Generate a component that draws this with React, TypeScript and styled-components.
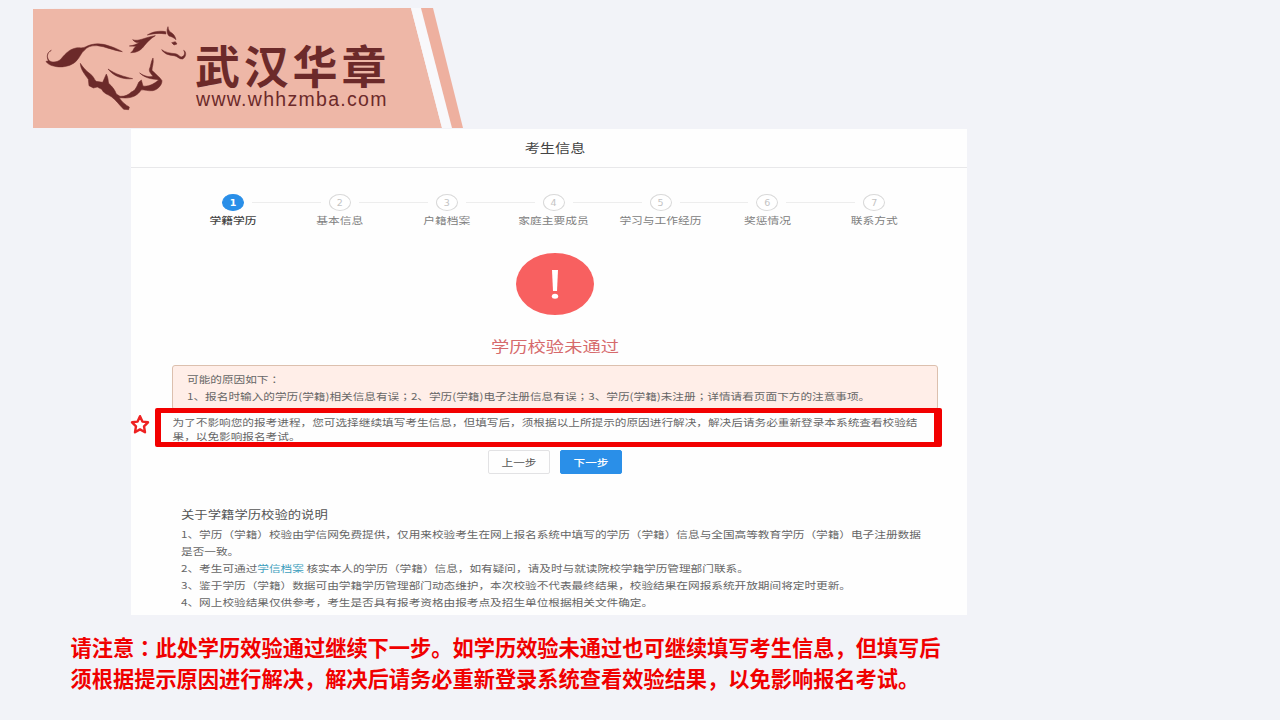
import React from "react";
import styled, { createGlobalStyle } from "styled-components";

const GlobalStyle = createGlobalStyle`
  body {
    margin: 0;
    background: #f2f3f8;
    font-family: "Noto Sans CJK SC", "Liberation Sans", sans-serif;
  }
`;

const Page = styled.main`
  width: 1280px;
  height: 720px;
  overflow: hidden;
  display: flex;
  flex-direction: column;
  align-items: flex-start;
  background: #f2f3f8;
`;

const Banner = styled.header`
  position: relative;
  width: 430px;
  height: 120px;
  margin: 8px 0 1px 33px;
  box-sizing: border-box;
  padding: 34px 0 0 162px;
  color: #6c2a2a;
`;

const BannerArt = styled.svg`
  position: absolute;
  inset: 0;
  width: 430px;
  height: 120px;
`;

const BrandName = styled.div`
  position: relative;
  font-size: 45px;
  line-height: 45px;
  font-weight: 700;
  letter-spacing: 3.8px;
  white-space: nowrap;
`;

const BrandUrl = styled.div`
  position: relative;
  font-family: "Liberation Sans", sans-serif;
  font-size: 19.5px;
  line-height: 24px;
  letter-spacing: 1.3px;
  padding-left: 1px;
  white-space: nowrap;
`;

const Panel = styled.section`
  width: 836px;
  height: 486px;
  margin-left: 131px;
  background: #fefefe;
  display: flex;
  flex-direction: column;
  color: #666;
`;

/* Wide lettering: the panel's glyphs are broader than they are tall. */
const Wide = styled.div<{ $size?: number; $line?: number }>`
  font-size: ${(p) => p.$size ?? 11.65}px;
  line-height: ${(p) => p.$line ?? 17}px;
  height: ${(p) => p.$line ?? 17}px;
  white-space: nowrap;
  transform: scaleY(0.82);
`;

const Centered = styled.span`
  font-family: "Noto Sans CJK JP", sans-serif;
`;

const PanelTitle = styled.div`
  height: 38px;
  box-sizing: content-box;
  border-bottom: 1px solid #e8e8ea;
  display: flex;
  justify-content: center;
  align-items: flex-start;
  padding-left: 12px;
  color: #444;
`;

const TitleText = styled(Wide)`
  margin-top: 7px;
`;

const Steps = styled.ol`
  list-style: none;
  margin: 26px 0 0 48.5px;
  padding: 0;
  display: grid;
  grid-template-columns: repeat(7, 106.9px);
`;

const Step = styled.li<{ $active?: boolean }>`
  display: flex;
  flex-direction: column;
  align-items: center;
  color: ${(p) => (p.$active ? "#444" : "#808080")};
  font-weight: ${(p) => (p.$active ? 500 : 400)};
`;

const StepTrack = styled.div`
  align-self: stretch;
  display: grid;
  grid-template-columns: 1fr 22px 1fr;
  column-gap: 8px;
  align-items: center;
`;

const Rail = styled.i<{ $hidden?: boolean }>`
  height: 1px;
  background: ${(p) => (p.$hidden ? "transparent" : "#ededed")};
`;

const Dot = styled.b<{ $active?: boolean }>`
  height: 17px;
  box-sizing: border-box;
  border-radius: 50%;
  border: 1px solid ${(p) => (p.$active ? "#2a8fe8" : "#d9d9d9")};
  background: ${(p) => (p.$active ? "#2a8fe8" : "#fff")};
  color: ${(p) => (p.$active ? "#fff" : "#c4c4c4")};
  font: ${(p) => (p.$active ? 700 : 400)} 9.5px/15px "DejaVu Sans", sans-serif;
  text-align: center;
`;

const Result = styled.div`
  margin: 25px 0 0 12px;
  display: flex;
  flex-direction: column;
  align-items: center;
  color: #d66a6c;
`;

const AlertIcon = styled.svg`
  width: 78px;
  height: 62px;
  margin-bottom: 17px;
`;

const Reasons = styled.div`
  box-sizing: border-box;
  width: 766px;
  height: 45px;
  margin: 7px 0 0 41px;
  padding: 3.5px 0 0 14px;
  border: 1px solid #dcc0ae;
  border-radius: 3px;
  background: #ffeee8;
`;

const Highlight = styled.div`
  position: relative;
  box-sizing: border-box;
  width: 787px;
  height: 39px;
  margin: -2px 0 0 24px;
  border: solid #f20000;
  border-width: 5px 8px 5px 6px;
  border-radius: 2px;
  background: #fefefe;
  padding: 2px 0 0 11.5px;
`;

const Star = styled.svg`
  position: absolute;
  left: -31px;
  top: 1px;
  width: 20px;
  height: 21px;
`;

const Actions = styled.div`
  display: flex;
  gap: 10px;
  margin: 3px 0 0 357px;
`;

const Button = styled.button<{ $primary?: boolean }>`
  box-sizing: border-box;
  width: 62px;
  height: 24px;
  padding: 0 0 1px;
  border: 1px solid ${(p) => (p.$primary ? "#2a8fe8" : "#e2e2e4")};
  border-radius: 2px;
  background: ${(p) => (p.$primary ? "#2a8fe8" : "#fefefe")};
  color: ${(p) => (p.$primary ? "#fff" : "#555")};
  font-family: inherit;
  font-weight: ${(p) => (p.$primary ? 500 : 400)};
`;

const Notes = styled.div`
  margin: 31px 0 0 50px;
`;

const NotesTitle = styled.div`
  height: 19.5px;
  color: #555;
`;

const Link = styled.a`
  color: #3f9fbd;
`;

const Caption = styled.p`
  margin: 15.5px 0 0 70.5px;
  color: #f00000;
  font-size: 21.22px;
  line-height: 31px;
  font-weight: 700;
  white-space: nowrap;
`;

const steps = ["学籍学历", "基本信息", "户籍档案", "家庭主要成员", "学习与工作经历", "奖惩情况", "联系方式"];

const Horse = () => (
  <g transform="translate(30 0) scale(0.33333)" fill="#6c2a2a" stroke="#6c2a2a" strokeWidth="1.6" strokeLinejoin="round">
    <path d="M64 151C50 158 49 172 58 182C66 188 80 187 90 180C103 166 115 148 138 144C148 142 156 146 166 141C190 128 215 130 238 138C254 143 266 149 277 155C250 152 226 139 202 137C183 136 171 141 163 151C154 158 150 171 140 182C126 197 102 203 80 200C62 197 52 192 48 184L55 183C50 172 50 158 64 151Z" />
    <path d="M302 158C313 152 307 146 319 139L298 138C309 137 320 133 330 127C322 129 314 127 308 119C325 126 344 112 376 107C361 116 353 125 343 137C334 149 323 158 302 158Z" />
    <path d="M352 105C369 94 389 92 407 95L408 102C390 99 371 100 352 105Z" />
    <path d="M414 80C409 91 411 101 417 108C424 109 431 113 438 119C435 107 430 101 422 97C416 92 415 87 414 80Z" />
    <path d="M425 128L436 125L441 132L432 135Z" />
    <path d="M395 149C405 157 421 160 436 161C446 163 448 170 454 171C462 169 467 161 461 151C470 155 469 172 458 177C448 178 443 169 432 167C416 166 402 161 395 149Z" />
    <path d="M151 190C162 207 173 216 181 222C190 228 193 238 198 244L218 247L229 222C235 233 234 242 236 250C247 260 255 270 259 282L270 289C285 290 296 284 304 276C316 273 321 258 326 247L334 240L339 258C353 261 371 253 386 240C373 236 350 239 329 219C344 229 357 232 369 229C362 220 357 216 358 208C363 198 362 186 369 174C372 188 366 201 366 211C375 221 390 232 396 242C396 256 382 270 368 272C353 274 343 268 333 270C325 285 307 294 286 294L268 293C274 304 288 316 298 321L296 329L281 328C268 315 258 300 244 290C231 282 220 280 215 268L202 261L190 264L177 257L175 238C164 222 152 210 151 190Z" />
    <path d="M234 207C257 223 282 230 308 236C281 239 253 231 234 207Z" />
  </g>
);

export default function App() {
  return (
    <Page>
      <GlobalStyle />
      <Banner>
        <BannerArt viewBox="33 8 430 120">
          <path d="M33 9L411 8L442 128H33Z" fill="#eeb7a7" />
          <path d="M411 8H421L452 128H442Z" fill="#f8f8fb" />
          <path d="M421 8H433L463 128H452Z" fill="#eeb09f" />
          <Horse />
        </BannerArt>
        <BrandName>武汉华章</BrandName>
        <BrandUrl>www.whhzmba.com</BrandUrl>
      </Banner>

      <Panel>
        <PanelTitle>
          <TitleText $size={15.2} $line={22}>考生信息</TitleText>
        </PanelTitle>
        <Steps>
          {steps.map((label, i) => (
            <Step key={label} $active={i === 0}>
              <StepTrack>
                <Rail $hidden={i === 0} />
                <Dot $active={i === 0}>{i + 1}</Dot>
                <Rail $hidden={i === steps.length - 1} />
              </StepTrack>
              <Wide $size={11.75}>{label}</Wide>
            </Step>
          ))}
        </Steps>

        <Result>
          <AlertIcon viewBox="0 0 78 62">
            <ellipse cx="39" cy="31" rx="39" ry="31" fill="#f86060" />
            <path d="M36 17H42L41 38H37Z" fill="#fff" />
            <ellipse cx="39" cy="43.2" rx="3.2" ry="2.5" fill="#fff" />
          </AlertIcon>
          <Wide $size={18.3} $line={26}>学历校验未通过</Wide>
        </Result>

        <Reasons>
          <Wide>可能的原因如下<Centered>：</Centered></Wide>
          <Wide>
            1、报名时输入的学历(学籍)相关信息有误<Centered>；</Centered>2、学历(学籍)电子注册信息有误
            <Centered>；</Centered>3、学历(学籍)未注册<Centered>；</Centered>详情请看页面下方的注意事项。
          </Wide>
        </Reasons>
        <Highlight>
          <Star viewBox="0 0 20 21">
            <path d="M10 2.2L12.4 7.6L18 8.3L14 12.3L15 18.3L10 15.4L5 18.3L6 12.3L2 8.3L7.6 7.6Z" fill="#fff" stroke="#ee2222" strokeWidth="2.4" strokeLinejoin="round" />
          </Star>
          <Wide $line={14}>为了不影响您的报考进程，您可选择继续填写考生信息，但填写后，须根据以上所提示的原因进行解决，解决后请务必重新登录本系统查看校验结</Wide>
          <Wide $line={14}>果，以免影响报名考试。</Wide>
        </Highlight>

        <Actions>
          <Button><Wide>上一步</Wide></Button>
          <Button $primary><Wide>下一步</Wide></Button>
        </Actions>

        <Notes>
          <NotesTitle>
            <Wide $size={13.35} $line={20}>关于学籍学历校验的说明</Wide>
          </NotesTitle>
          <Wide>1、学历（学籍）校验由学信网免费提供，仅用来校验考生在网上报名系统中填写的学历（学籍）信息与全国高等教育学历（学籍）电子注册数据</Wide>
          <Wide>是否一致。</Wide>
          <Wide>2、考生可通过<Link>学信档案</Link> 核实本人的学历（学籍）信息，如有疑问，请及时与就读院校学籍学历管理部门联系。</Wide>
          <Wide>3、鉴于学历（学籍）数据可由学籍学历管理部门动态维护，本次校验不代表最终结果，校验结果在网报系统开放期间将定时更新。</Wide>
          <Wide>4、网上校验结果仅供参考，考生是否具有报考资格由报考点及招生单位根据相关文件确定。</Wide>
        </Notes>
      </Panel>

      <Caption>
        请注意<Centered>：</Centered>此处学历效验通过继续下一步。如学历效验未通过也可继续填写考生信息，但填写后
        <br />
        须根据提示原因进行解决，解决后请务必重新登录系统查看效验结果，以免影响报名考试。
      </Caption>
    </Page>
  );
}
